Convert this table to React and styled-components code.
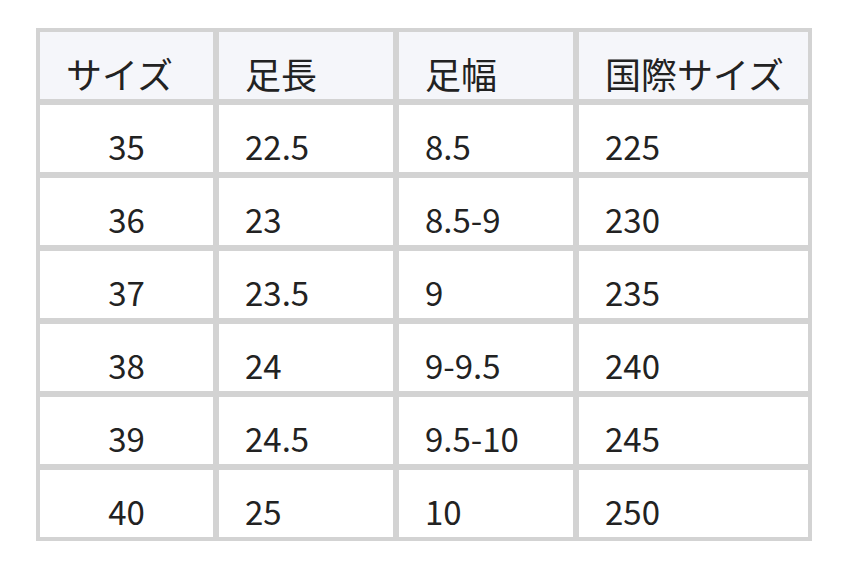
import React from 'react';
import styled, {createGlobalStyle} from "styled-components";

const GlobalStyle = createGlobalStyle`
  body {
    margin: 0;
    background: #ffffff;
    font-family: "Noto Sans CJK JP", "Noto Sans", sans-serif;
    color: #222222;
  }
`

const Page = styled.main`
  padding: 28px 0 0 36px;
`

const SizeTable = styled.table`
  width: 776px;
  table-layout: fixed;
  border-collapse: separate;
  border-spacing: 0;
  border: 1px solid #d3d3d3;
`

const HeadCell = styled.th`
  box-sizing: border-box;
  height: 73px;
  padding: 15px 26px 0;
  border: 3px solid #d3d3d3;
  background-color: #f5f6fa;
  font-size: 36px;
  font-weight: 400;
  line-height: 52px;
  text-align: left;
  vertical-align: top;
  white-space: nowrap;
`

const Cell = styled.td`
  box-sizing: border-box;
  height: 73px;
  padding: 16px 26px 0;
  border: 3px solid #d3d3d3;
  font-size: 33px;
  line-height: 51px;
  text-align: ${props => props.$center ? 'center' : 'left'};
  vertical-align: top;
`

const columns = [
    {title: "サイズ", width: 179},
    {title: "足長", width: 180},
    {title: "足幅", width: 180},
    {title: "国際サイズ", width: 235},
];

const rows = [
    ["35", "22.5", "8.5", "225"],
    ["36", "23", "8.5-9", "230"],
    ["37", "23.5", "9", "235"],
    ["38", "24", "9-9.5", "240"],
    ["39", "24.5", "9.5-10", "245"],
    ["40", "25", "10", "250"],
];

const App = () => {
    return (
        <>
            <GlobalStyle/>
            <Page>
                <SizeTable>
                    <colgroup>
                        {columns.map(col => <col key={col.title} style={{width: col.width}}/>)}
                    </colgroup>
                    <thead>
                        <tr>
                            {columns.map(col => <HeadCell key={col.title}>{col.title}</HeadCell>)}
                        </tr>
                    </thead>
                    <tbody>
                        {rows.map(row => (
                            <tr key={row[0]}>
                                {row.map((value, i) => (
                                    <Cell key={i} $center={i === 0}>{value}</Cell>
                                ))}
                            </tr>
                        ))}
                    </tbody>
                </SizeTable>
            </Page>
        </>
    );
}

export default App;
